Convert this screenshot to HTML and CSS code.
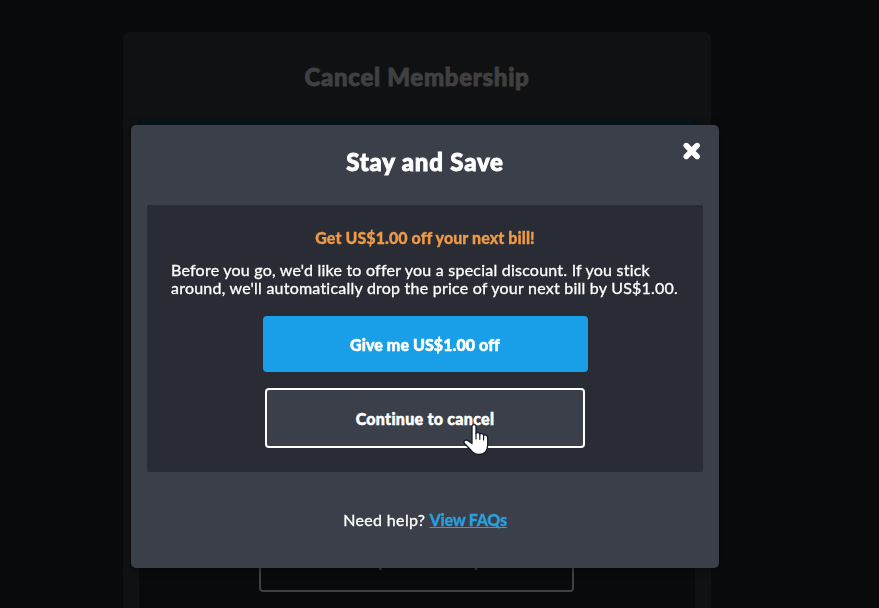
FILE: index.html
```html
<!DOCTYPE html>
<html lang="en">
<head>
<meta charset="utf-8">
<title>Cancel Membership</title>
<link rel="stylesheet" href="styles.css">
</head>
<body>
<main class="page">
  <h1 class="page-title">Cancel Membership</h1>
  <div class="page-panel">
    <div class="page-banner"></div>
    <button class="keep">Keep membership</button>
  </div>
</main>
<div class="overlay">
  <section class="modal" role="dialog" aria-modal="true">
    <header class="modal-header">
      <h2 class="modal-title">Stay and Save</h2>
      <button class="close" aria-label="Close">
        <svg width="20" height="20" viewBox="0 0 20 20"><path d="M4.3 4.6 15.1 15.4M15.1 4.6 4.3 15.4" stroke="#fff" stroke-width="5.6" stroke-linecap="round"/></svg>
      </button>
    </header>
    <div class="offer">
      <h3 class="offer-title">Get US$1.00 off your next bill!</h3>
      <p class="offer-text">Before you go, we'd like to offer you a special discount. If you stick<br>around, we'll automatically drop the price of your next bill by US$1.00.</p>
      <button class="accept">Give me US$1.00 off</button>
      <button class="continue">Continue to cancel
        <svg class="pointer" width="26" height="33" viewBox="0 0 26 33"><path d="M9 3.6C9 .9 13 .9 13 3.6V10.5C13.5 9 16.7 9.2 16.8 11.3C17.5 10 20.5 10.4 20.6 12.4C21.5 11.5 24.7 12 24.7 14.5V22C24.7 27.5 21.5 31.5 16 31.5C12 31.5 9.5 29.5 7.5 26.7L1.5 20.5C-.2 18.2 2.5 16 5 17.6L9 20.5Z" fill="#fff" stroke="#171a2b" stroke-width="1.3" stroke-linejoin="round"/><path d="M13 10.5v5.5M16.8 11.3v5M20.6 12.4v4.5" stroke="#171a2b" stroke-width="1.2" stroke-linecap="round"/></svg>
      </button>
    </div>
    <p class="help"><span>Need help?</span> <a href="#">View FAQs</a></p>
  </section>
</div>
</body>
</html>
```
FILE: styles.css
```css
* { box-sizing: border-box; }
body {
  margin: 0;
  height: 608px;
  overflow: hidden;
  background: #090a0c;
  color: #fff;
  font-family: Lato, "Liberation Sans", sans-serif;
  font-size: 16px;
  font-variant-ligatures: none;
}
h1, h2, h3, p { margin: 0; }
button { font: inherit; color: inherit; cursor: pointer; }
.page {
  width: 588px;
  height: 576px;
  margin: 32px 0 0 123px;
  padding: 0 16px;
  background: #101113;
  border-radius: 6px 6px 0 0;
  display: flex;
  flex-direction: column;
}
.page-title {
  height: 88px;
  text-align: center;
  font-size: 24px;
  line-height: 90px;
  font-weight: 900;
  letter-spacing: .7px;
  color: #404040;
  -webkit-text-stroke: .9px #404040;
}
.page-panel {
  flex: 1;
  background: #090a0c;
  display: flex;
  flex-direction: column;
  justify-content: space-between;
  padding-bottom: 16px;
}
.page-banner { height: 32px; background: #06151f; border-radius: 3px; }
.keep {
  width: 315px;
  height: 60px;
  margin-left: 120px;
  padding: 0 0 3px;
  border: 2px solid #404040;
  border-radius: 4px;
  background: none;
  color: #404040;
  font-weight: 900;
  line-height: 18px;
  letter-spacing: .3px;
}
.overlay { position: fixed; inset: 0; padding: 125px 0 0 131px; }
.modal {
  width: 588px;
  height: 443px;
  padding: 0 16px;
  background: #3b3f4a;
  border-radius: 5px;
  box-shadow: 0 1px 8px rgba(0, 0, 0, .45);
}
.modal-header { height: 80px; position: relative; }
.modal-title {
  text-align: center;
  font-size: 24px;
  line-height: 73px;
  font-weight: 900;
  letter-spacing: .8px;
  -webkit-text-stroke: .9px #fff;
}
.close {
  position: absolute;
  top: 16px;
  right: 1px;
  width: 20px;
  height: 20px;
  padding: 0;
  border: 0;
  background: none;
}
.close svg { display: block; }
.offer {
  height: 267px;
  padding: 24px 24px 0;
  background: #292c34;
  border-radius: 2px;
  display: flex;
  flex-direction: column;
  align-items: center;
}
.offer-title {
  font-size: 16px;
  line-height: 18px;
  font-weight: 900;
  letter-spacing: .08px;
  color: #ed9a48;
  -webkit-text-stroke: .3px #ed9a48;
}
.offer-text {
  width: 508px;
  margin-top: 14px;
  line-height: 18px;
  letter-spacing: .225px;
  white-space: nowrap;
  -webkit-text-stroke: .3px #fff;
}
.accept, .continue {
  padding: 0;
  border-radius: 4px;
  font-weight: 900;
  -webkit-text-stroke: .5px #fff;
}
.accept {
  width: 325px;
  height: 56px;
  margin-top: 19px;
  border: 0;
  background: #189fe7;
  letter-spacing: .08px;
}
.continue {
  position: relative;
  width: 320px;
  height: 60px;
  margin-top: 16px;
  border: 2px solid #fff;
  background: #3b3f4a;
  letter-spacing: .28px;
}
.pointer { position: absolute; left: 196px; top: 33px; }
.help { margin-top: 38px; text-align: center; line-height: 20px; }
.help span { letter-spacing: .35px; -webkit-text-stroke: .3px #fff; }
.help a {
  color: #2b9fde;
  font-weight: 900;
  letter-spacing: -.2px;
  -webkit-text-stroke: .3px #2b9fde;
  text-underline-offset: 1px;
  text-decoration-thickness: 1px;
  text-decoration-skip-ink: none;
}
```
